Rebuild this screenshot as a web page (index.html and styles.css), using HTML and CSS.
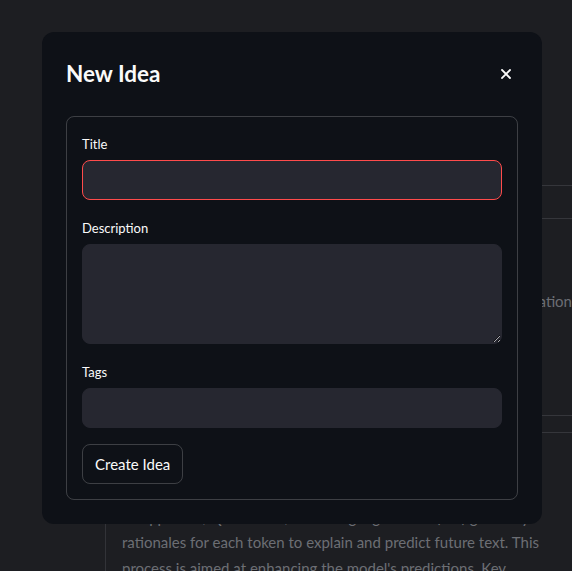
FILE: index.html
```html
<!DOCTYPE html>
<html lang="en">
<head>
<meta charset="utf-8">
<title>New Idea</title>
<link rel="stylesheet" href="styles.css">
</head>
<body>
<div class="app">
  <main class="bg-main">
    <div class="bg-hidden"></div>
    <div class="bg-row"></div>
    <p class="bg-line">Quiet-STaR teaches models to reason via rationale generation</p>
    <div class="bg-row bg-row-thin"></div>
    <div class="bg-quote">
      <p class="bg-para">Its approach, Quiet-STaR, has a language model (LM) generally rationales for each token to explain and predict future text. This process is aimed at enhancing the model's predictions. Key</p>
    </div>
  </main>
</div>

<div class="dialog" role="dialog" aria-labelledby="dlg-title">
  <div class="dialog-header">
    <h2 id="dlg-title" class="dialog-title">New Idea</h2>
    <button class="close-btn" aria-label="Close">
      <svg width="10" height="10" viewBox="0 0 10 10"><path d="M1 1 L9 9 M9 1 L1 9" stroke="#fafafa" stroke-width="1.8" stroke-linecap="square" fill="none"/></svg>
    </button>
  </div>
  <form class="form">
    <div class="field">
      <label class="label" for="title">Title</label>
      <input id="title" class="input input-focus" type="text">
    </div>
    <div class="field">
      <label class="label" for="desc">Description</label>
      <textarea id="desc" class="textarea"></textarea>
    </div>
    <div class="field">
      <label class="label" for="tags">Tags</label>
      <input id="tags" class="input" type="text">
    </div>
    <button type="button" class="submit-btn">Create Idea</button>
  </form>
</div>
</body>
</html>
```
FILE: styles.css
```css
* { box-sizing: border-box; }
html, body {
  margin: 0;
  height: 100%;
}
body {
  background: #1d1e22;
  font-family: Lato, "Liberation Sans", sans-serif;
  overflow: hidden;
}
.app {
  width: 100%;
  height: 100%;
}
.bg-main {
  margin-left: 105px;
  height: 100%;
  color: #6c6e74;
  font-size: 15px;
  line-height: 25.5px;
}
.bg-hidden { height: 185px; }
.bg-row {
  height: 34px;
  border-top: 1px solid #35363b;
  border-bottom: 1px solid #35363b;
}
.bg-row-thin {
  height: 18px;
  margin-top: 100px;
}
.bg-line {
  margin: 70px 0 0;
  padding-left: 17px;
  text-align: right;
}
.bg-quote {
  margin-top: 60px;
  padding: 12px 0 0 16px;
  border-left: 1px solid #323338;
  height: 200px;
}
.bg-para {
  margin: 0;
}

.dialog {
  position: fixed;
  left: 42px;
  top: 32px;
  width: 500px;
  padding: 24px;
  background: #0e1117;
  border-radius: 12px;
  color: #fafafa;
}
.dialog-header {
  display: flex;
  align-items: center;
  justify-content: space-between;
  height: 36px;
  margin-bottom: 24px;
}
.dialog-title {
  margin: 0;
  font-size: 22.5px;
  font-weight: 700;
  line-height: 36px;
}
.close-btn {
  width: 24px;
  height: 24px;
  padding: 0;
  border: 0;
  background: transparent;
  display: flex;
  align-items: center;
  justify-content: center;
}
.form {
  border: 1px solid rgba(250, 250, 250, 0.2);
  border-radius: 8px;
  padding: 15px;
  display: flex;
  flex-direction: column;
  gap: 16px;
}
.field {
  display: flex;
  flex-direction: column;
}
.label {
  font-size: 13px;
  line-height: 24px;
  height: 24px;
  margin-bottom: 4px;
  color: #fafafa;
}
.input, .textarea {
  width: 100%;
  background: #262730;
  border: 1px solid #262730;
  border-radius: 8px;
  color: #fafafa;
  font: inherit;
  font-size: 15px;
  outline: none;
}
.input { height: 40px; padding: 0 12px; }
.input-focus { border-color: #ff4b4b; }
.textarea {
  height: 100px;
  padding: 8px 12px;
  resize: vertical;
  display: block;
}
.submit-btn {
  align-self: flex-start;
  height: 40px;
  padding: 0 12px;
  font-family: inherit;
  font-size: 15px;
  color: #fafafa;
  background: transparent;
  border: 1px solid rgba(250, 250, 250, 0.2);
  border-radius: 8px;
}
```
